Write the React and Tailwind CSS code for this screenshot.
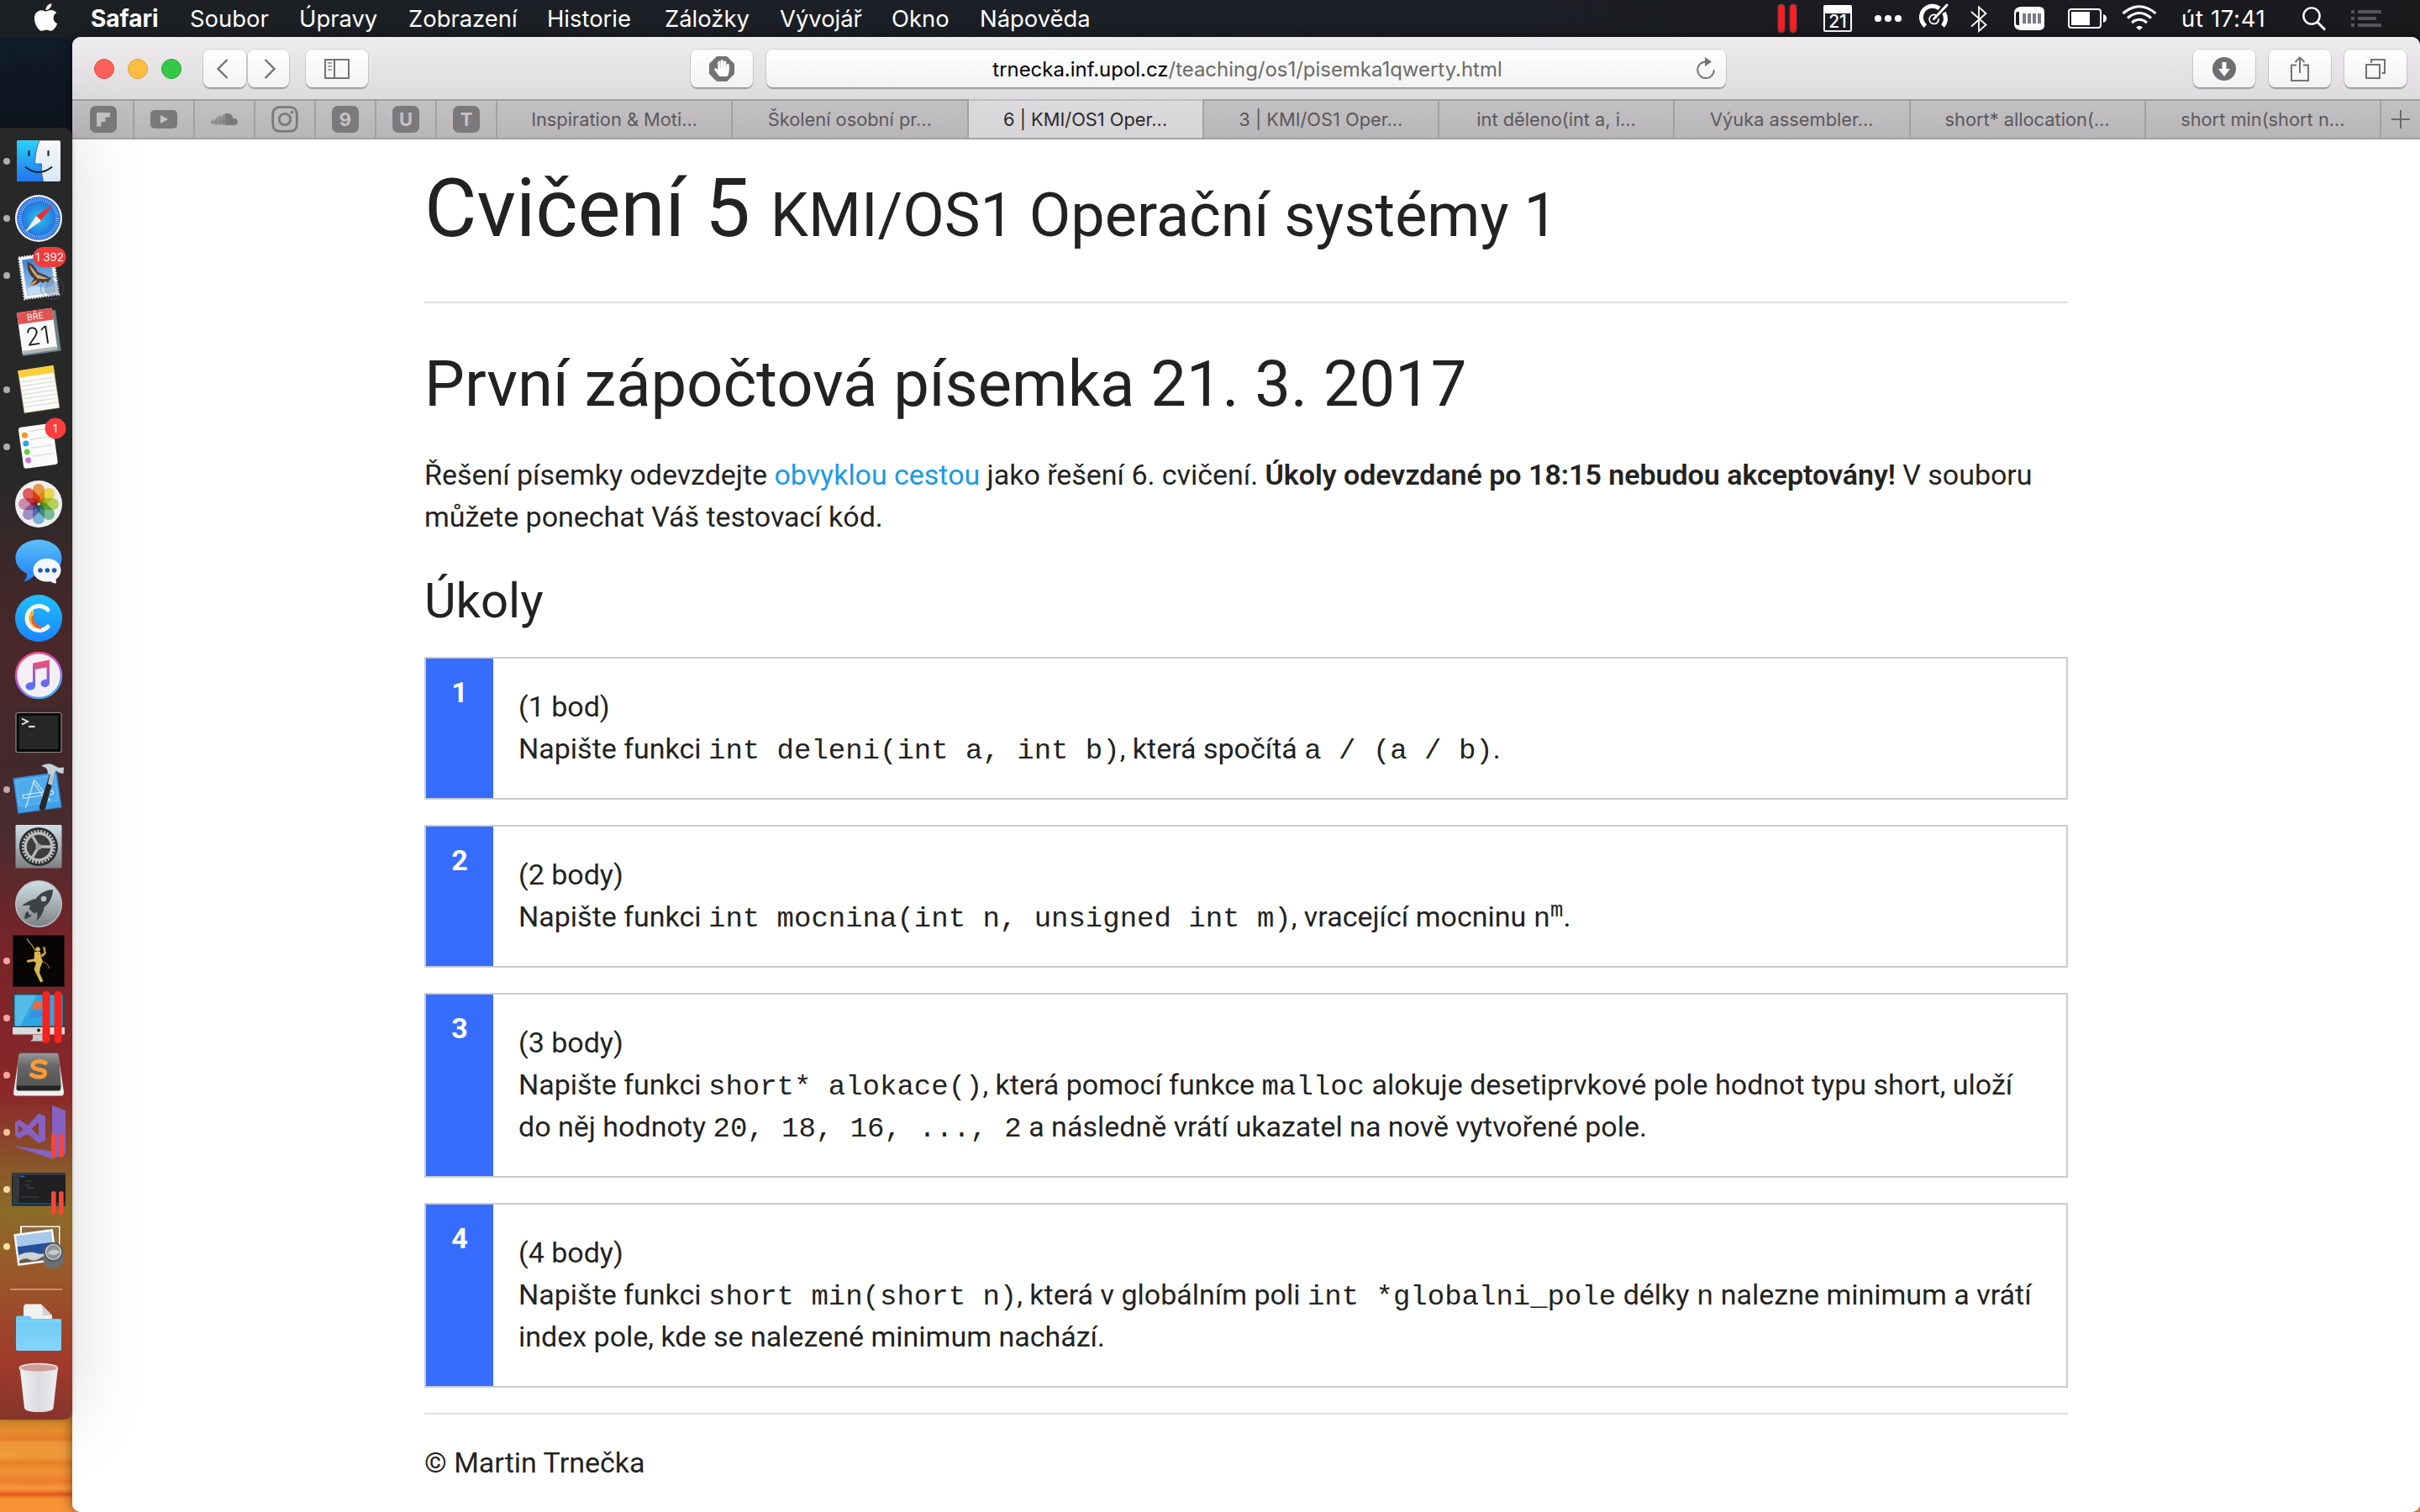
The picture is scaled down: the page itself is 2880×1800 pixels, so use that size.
import React from "react";
import { FaApple, FaHandPaper, FaInstagram, FaSoundcloud } from "react-icons/fa";

/* ---------- menu bar ---------- */

function MenuItem({ children, className }) {
  return <span className={`shrink-0 whitespace-nowrap ${className}`}>{children}</span>;
}

function MenuBar() {
  return (
    <header className="flex h-11 shrink-0 items-center bg-linear-to-r from-[#1c2024] via-[#1b1f26] to-[#1a1a1d] text-[27.4px] leading-[44px] text-white">
      <FaApple className="-mt-1 ml-[36px] mr-[35px] size-[37px] shrink-0" />
      <MenuItem className="w-[118px] text-[28px] font-bold">Safari</MenuItem>
      <MenuItem className="w-[130px]">Soubor</MenuItem>
      <MenuItem className="w-[130px]">Úpravy</MenuItem>
      <MenuItem className="w-[165px]">Zobrazení</MenuItem>
      <MenuItem className="w-[140px]">Historie</MenuItem>
      <MenuItem className="w-[137px]">Záložky</MenuItem>
      <MenuItem className="w-[133px]">Vývojář</MenuItem>
      <MenuItem className="w-[105px]">Okno</MenuItem>
      <MenuItem className="w-[140px]">Nápověda</MenuItem>
      <div className="ml-auto flex items-center">
        <svg className="h-11 w-[26px]" viewBox="0 0 26 44">
          <rect x="2" y="5" width="8" height="34" rx="4" fill="#fe1c20" stroke="#6b4a4c" strokeWidth="0.8" />
          <rect x="16" y="5" width="8" height="34" rx="4" fill="#fe1c20" stroke="#6b4a4c" strokeWidth="0.8" />
        </svg>
        <div className="ml-[30px] flex h-8 w-[34px] items-end justify-center rounded-[2px] border-2 border-t-[10px] border-white text-[21px] leading-[20px] font-medium">
          21
        </div>
        <svg className="ml-[26px] h-11 w-[34px]" viewBox="0 0 34 44" fill="#fff">
          <circle cx="5" cy="22" r="4.1" />
          <circle cx="17" cy="22" r="4.1" />
          <circle cx="29" cy="22" r="4.1" />
        </svg>
        <svg className="ml-[20px] h-11 w-[36px]" viewBox="0 0 36 44" fill="none" stroke="#fff">
          <path d="M7.5 31 A13.3 13.3 0 0 1 24 10" strokeWidth="5" />
          <path d="M29.5 15 A13.3 13.3 0 0 1 28 31" strokeWidth="5" />
          <path d="M20 18 A5.5 5.5 0 1 0 23 22" strokeWidth="1.8" />
          <path d="M33 6 L17.5 22.5" strokeWidth="3" strokeLinecap="round" />
        </svg>
        <svg className="ml-[24px] h-11 w-[22px]" viewBox="0 0 22 44" fill="none" stroke="#fff" strokeWidth="1.8">
          <path d="M2 14 L19.5 29.5 L11 37 V8.5 L19.5 16 L2 31.5" />
        </svg>
        <svg className="ml-[31px] h-11 w-[36px]" viewBox="0 0 36 44">
          <path d="M8 8 H29 Q36 8 36 14 V30 Q36 36 29 36 H8 Q0 35 0 29 V15 Q0 9 8 8Z" fill="#fff" />
          <path d="M6 14 H4 Q2 14 2 17 V27 Q2 30 4 30 H6Z" fill="#1a1b20" />
          <path d="M10 16h4v12h-4z M16 16h4v12h-4z M22 16h4v12h-4z M28 16h4v12h-4z" fill="#7c7c82" />
        </svg>
        <svg className="ml-[28px] h-11 w-[46px]" viewBox="0 0 46 44">
          <rect x="1" y="11" width="38" height="22" rx="3" fill="none" stroke="#fff" strokeWidth="2" />
          <rect x="4" y="14" width="22" height="16" fill="#fff" />
          <path d="M42 17 Q46 18 46 22 Q46 26 42 27Z" fill="#fff" />
        </svg>
        <svg className="ml-[18px] h-11 w-[42px]" viewBox="0 0 42 44" fill="none" stroke="#fff" strokeWidth="3">
          <path d="M1.500 16 Q21 -0.500 40.500 16" />
          <path d="M7 21.500 Q21 9.500 35 21.500" />
          <path d="M12 27 Q21 19.500 30 27" />
          <path d="M17 32.500 Q21 29 25 32.500 L21 36Z" fill="#fff" stroke="none" />
        </svg>
        <span className="ml-[29px] w-[102px] whitespace-nowrap tracking-[0.7px]">út 17:41</span>
        <svg className="ml-[40px] h-11 w-[32px]" viewBox="0 0 32 44" fill="none" stroke="#fff">
          <circle cx="13" cy="19" r="9.6" strokeWidth="2.4" />
          <path d="M19.5 26 L29 35.5" strokeWidth="3" />
        </svg>
        <svg className="ml-[28px] mr-[46px] h-11 w-[36px]" viewBox="0 0 36 44" fill="#56565a">
          <path d="M0 12h4v4H0z M8 12h28v4H8z M0 20h4v4H0z M8 20h22v4H8z M0 28h4v4H0z M8 28h28v4H8z" />
        </svg>
      </div>
    </header>
  );
}

/* ---------- dock ---------- */

function DockRow({ dot, children }) {
  return (
    <div className="flex h-[68px] shrink-0 items-center">
      <span className={`ml-1 size-2 shrink-0 rounded-full ${dot || "bg-transparent"}`} />
      <svg className="ml-0.5 size-16 shrink-0 overflow-visible" viewBox="0 0 64 64">
        {children}
      </svg>
    </div>
  );
}

const petals = ["#f7962b", "#f6e33a", "#b9d64a", "#6cc08a", "#6fb3e0", "#9a8bc8", "#d582b0", "#ee4b43"];

function Dock() {
  return (
    <aside className="relative z-10 mt-[108px] flex h-[1538px] w-[86px] flex-col rounded-tr-[10px] rounded-br-[10px] bg-[linear-gradient(180deg,#282828_0px,#282828_410px,#4a282a_610px,#42282c_750px,#4a2c30_840px,#782428_975px,#8a272a_1150px,#8a562a_1235px,#8b6b28_1290px,#985a2a_1355px,#a03a2c_1470px,#86352b_1538px)] pt-1.5 font-[Inter,sans-serif] shadow-[0_0_90px_rgba(0,0,0,0.15),0_0_4px_rgba(0,0,0,0.25)]">
      <svg className="absolute size-0">
        <defs>
          <linearGradient id="blueV" x1="0" y1="0" x2="0" y2="1"><stop offset="0" stopColor="#2bd0fa" /><stop offset="1" stopColor="#2174ee" /></linearGradient>
          <linearGradient id="whiteV" x1="0" y1="0" x2="0" y2="1"><stop offset="0" stopColor="#f8f8fa" /><stop offset="1" stopColor="#d8e6f4" /></linearGradient>
          <radialGradient id="compass"><stop offset="0" stopColor="#27c6ea" /><stop offset="1" stopColor="#2361de" /></radialGradient>
          <linearGradient id="sky" x1="0" y1="0" x2="0" y2="1"><stop offset="0" stopColor="#3a84d6" /><stop offset="1" stopColor="#a5cdf0" /></linearGradient>
          <linearGradient id="chat" x1="0" y1="0" x2="0" y2="1"><stop offset="0" stopColor="#5cc1f8" /><stop offset="1" stopColor="#1c7df6" /></linearGradient>
          <linearGradient id="cblue" x1="0" y1="0" x2="0" y2="1"><stop offset="0" stopColor="#20c0fc" /><stop offset="1" stopColor="#1a84fb" /></linearGradient>
          <linearGradient id="ring" x1="0.2" y1="0" x2="0.7" y2="1"><stop offset="0" stopColor="#fb4a5c" /><stop offset="0.5" stopColor="#c050e0" /><stop offset="1" stopColor="#35b9f4" /></linearGradient>
          <linearGradient id="note" x1="0" y1="0" x2="0" y2="1"><stop offset="0" stopColor="#fb4f63" /><stop offset="0.6" stopColor="#8a62e8" /><stop offset="1" stopColor="#4a74f2" /></linearGradient>
          <linearGradient id="steel" x1="0" y1="0" x2="0" y2="1"><stop offset="0" stopColor="#d0e0e8" /><stop offset="1" stopColor="#7e8082" /></linearGradient>
          <linearGradient id="keycap" x1="0" y1="0" x2="0" y2="1"><stop offset="0" stopColor="#9a9a9a" /><stop offset="0.4" stopColor="#666" /><stop offset="1" stopColor="#555" /></linearGradient>
          <linearGradient id="folder" x1="0" y1="0" x2="0" y2="1"><stop offset="0" stopColor="#6ccbf3" /><stop offset="1" stopColor="#84d4fa" /></linearGradient>
          <linearGradient id="trash" x1="0" y1="0" x2="1" y2="0"><stop offset="0" stopColor="#f2f2f3" /><stop offset="0.5" stopColor="#dadbde" /><stop offset="1" stopColor="#eeeef0" /></linearGradient>
        </defs>
      </svg>

      {/* Finder */}
      <DockRow dot="bg-[#adadad]">
        <rect x="6" y="7.3" width="52" height="48.7" rx="2" fill="url(#whiteV)" />
        <path d="M8 7.3 H33 C29 17 28 26 27.5 35 H35.5 C35 43 36 50 37.5 56 H8 Q6 56 6 54 V9.3 Q6 7.3 8 7.3Z" fill="url(#blueV)" />
        <path d="M33 7.3 C29 17 28 26 27.5 35 H35.5 C35 43 36 50 37.5 56" fill="none" stroke="#23435f" strokeWidth="0.7" />
        <path d="M20.5 20v5 M43.5 20v5" stroke="#10263c" strokeWidth="2.2" strokeLinecap="round" />
        <path d="M16.5 39 Q32 51 47.5 39" fill="none" stroke="#10202e" strokeWidth="2" strokeLinecap="round" />
      </DockRow>

      {/* Safari */}
      <DockRow dot="bg-[#adadad]">
        <circle cx="32" cy="32" r="28" fill="#f0f1f3" />
        <circle cx="32" cy="32" r="25.8" fill="url(#compass)" />
        <circle cx="32" cy="32" r="22.5" fill="none" stroke="#b9dcf6" strokeWidth="4.5" strokeDasharray="0.8 1.56" opacity="0.8" />
        <path d="M49 15 L29 29 L35 35Z" fill="#ee2f37" />
        <path d="M15.5 49 L29 29 L35 35Z" fill="#eceef0" />
      </DockRow>

      {/* Mail */}
      <DockRow dot="bg-[#adadad]">
        <g transform="rotate(-8 32 32)">
          <rect x="11.5" y="7.5" width="41" height="50" fill="#f3f3f3" stroke="#f3f3f3" strokeWidth="2.4" strokeDasharray="1.7 1.5" />
          <rect x="15" y="11" width="34" height="43" fill="url(#sky)" />
          <path d="M16 46 Q24 42 32 46 T48 44 V53 H16Z" fill="#d4e6f6" opacity="0.7" />
          <path d="M21 14 C27 17 30 22 31.500 28 C37 31 43 34 47 38 L44 39 L42 42 L39 40 L36 42 L33 39.500 C30 42 25 43 20 42 C22 39 24.500 37 26 35 C21 30 19 21 21 14Z" fill="#4f3b2c" />
          <path d="M22.500 18 C26 21 28 26 30.500 30.500 C35 33 40 35 44 37.500 C39 37.500 34 36.500 30.500 35.500 C27 31 23.500 25 22.500 18Z" fill="#bfa584" />
          <path d="M20 42 C22.500 39 26 37 29.500 37.500 C27.500 40.500 24 42.500 20 42Z" fill="#d9a05a" />
        </g>
        <circle cx="48" cy="47" r="13.5" fill="none" stroke="#42617f" strokeWidth="0.8" opacity="0.7" />
        <circle cx="48" cy="47" r="9.5" fill="#42617f" opacity="0.3" />
        <rect x="25.5" y="-2" width="39" height="24" rx="12" fill="#ef3d3c" />
        <text x="45" y="15" fontSize="13.5" fill="#fff" textAnchor="middle">1 392</text>
      </DockRow>

      {/* Calendar */}
      <DockRow>
        <g transform="rotate(-8 32 32)">
          <rect x="9.5" y="8" width="46" height="49" rx="1" fill="#6d8089" />
          <rect x="9.5" y="5" width="42" height="50" rx="1" fill="#f9f9f9" />
          <path d="M9.5 6 q0-1 1-1 h40 q1 0 1 1 V19 H9.5Z" fill="#e05553" />
          <path d="M10 51h41v4H10z" fill="#33383b" opacity="0.35" />
          <text x="30.5" y="16" fontSize="10.5" fill="#fff" textAnchor="middle">BŘE</text>
          <text x="30.5" y="46" fontSize="29" fontWeight="300" fill="#1b1b1b" textAnchor="middle">21</text>
        </g>
      </DockRow>

      {/* Notes */}
      <DockRow dot="bg-[#adadad]">
        <g transform="rotate(-8.5 32 32)">
          <rect x="11" y="6" width="42.5" height="51" fill="#fbfbf8" stroke="#a3883a" strokeWidth="0.5" />
          <rect x="11" y="6" width="42.5" height="8.5" fill="#fcce3a" />
          <path d="M11 20h42 M11 25h42 M11 30h42 M11 35h42 M11 40h42 M11 45h42 M11 50h42" stroke="#cfcfcf" strokeWidth="0.8" />
        </g>
      </DockRow>

      {/* Reminders */}
      <DockRow dot="bg-[#adadad]">
        <g transform="rotate(-8 32 32)">
          <rect x="11" y="6" width="41" height="49.5" rx="3" fill="#fafafa" />
          <path d="M23 12h26 M23 22h26 M23 32h26 M23 42h26" stroke="#cccccc" strokeWidth="0.8" />
          <circle cx="17.5" cy="16" r="3.5" fill="#fb9322" />
          <circle cx="17.5" cy="26" r="3.5" fill="#27a7f5" />
          <circle cx="17.5" cy="36" r="3.5" fill="#61cf3f" />
          <circle cx="17.5" cy="46" r="3.5" fill="#c774dd" />
        </g>
        <circle cx="52" cy="10" r="12.5" fill="#fa3e3e" />
        <text x="51.5" y="14.7" fontSize="13.5" fill="#fff" textAnchor="middle">1</text>
      </DockRow>

      {/* Photos */}
      <DockRow>
        <circle cx="32" cy="32" r="28" fill="#eeeef0" />
        {petals.map((c, i) => (
          <rect key={c} x="25" y="8" width="14" height="24" rx="7" fill={c} opacity="0.86" transform={`rotate(${i * 45} 32 32)`} className="mix-blend-multiply" />
        ))}
        <circle cx="32" cy="32" r="1.5" fill="#fff" />
      </DockRow>

      {/* Messages */}
      <DockRow>
        <path d="M32 6.5 C47.5 6.5 59.5 16 59.5 28.5 C59.5 41 47.5 50.5 32 50.5 C30 50.5 28 50.3 26 50 C23 53.5 18.5 56 14 56 C17 53.5 18.5 50 18 47 C9.5 43 4.5 36 4.5 28.5 C4.5 16 16.5 6.5 32 6.5Z" fill="url(#chat)" />
        <path d="M42 29 C51.5 29 58.5 35 58.5 42.8 C58.5 47 56.5 51 52.5 53.7 C52.5 55.5 53.5 57.5 52.5 58.5 C49.5 58.5 47.5 57.5 46 56 C44.5 56.5 43 56.5 42 56.5 C32.5 56.5 25.5 50.5 25.5 42.8 C25.5 35 32.5 29 42 29Z" fill="#f1f7fd" />
        <circle cx="34" cy="43" r="2.8" fill="#1d5cae" />
        <circle cx="42.3" cy="43" r="2.8" fill="#1d5cae" />
        <circle cx="50.6" cy="43" r="2.8" fill="#1d5cae" />
      </DockRow>

      {/* Blue disc with a C */}
      <DockRow>
        <circle cx="32" cy="32" r="28" fill="url(#cblue)" />
        <path d="M43 22 A14.5 14.5 0 1 0 43 42" fill="none" stroke="#f3f5f6" strokeWidth="5" strokeLinecap="round" />
        <path d="M24.5 25 Q20 33 26 40.5" fill="none" stroke="#f9b82b" strokeWidth="4" strokeLinecap="round" />
        <path d="M24.8 31 Q23.5 40 34 43.3" fill="none" stroke="#fb5a12" strokeWidth="3" strokeLinecap="round" />
      </DockRow>

      {/* iTunes */}
      <DockRow>
        <circle cx="32" cy="32" r="27" fill="#f3f0f5" stroke="url(#ring)" strokeWidth="2.6" />
        <path d="M25 17.5 L45 13.5 V40.5 C45 43.5 42.5 46 39.5 46 C36.5 46 34.5 44 34.5 41.5 C34.5 38.5 37.5 37 41.5 36.5 V22.5 L28 25 V44 C28 47 25.5 49.5 22 49.5 C19 49.5 16.5 47.5 16.5 45 C16.5 42 19.5 40.5 25 40Z" fill="url(#note)" />
      </DockRow>

      {/* Terminal */}
      <DockRow>
        <rect x="5" y="8.5" width="54" height="47" rx="2" fill="#050505" stroke="#8a8a8c" strokeWidth="1.2" />
        <rect x="8.5" y="12" width="47" height="40" fill="#262626" />
        <path d="M12 15.5 L19 19 L12 22.5 M20 25 h7.5" fill="none" stroke="#f2f2f2" strokeWidth="1.9" />
      </DockRow>

      {/* Xcode */}
      <DockRow dot="bg-[#c5a5a7]">
        <g transform="rotate(-8 30 36)">
          <rect x="4.5" y="15" width="52" height="42" fill="#3f9fe8" stroke="#2c7cc9" strokeWidth="0.8" />
          <rect x="7" y="18" width="47" height="31" fill="#5ab4f3" opacity="0.6" stroke="#a7daf9" strokeWidth="0.7" />
          <path d="M29 20 L17 46 L14 52 M29 20 L44 46 L40 47 L27 22 M13 36 H49 V40 H13Z" fill="none" stroke="#c4e6fc" strokeWidth="1.3" />
        </g>
        <path d="M45.5 12 L51 14 L40 54.5 Q38 58.5 33.5 56 Q32.5 55 33 52Z" fill="#262728" />
        <path d="M46 12 L51 14 L48 27 L43 25Z" fill="#b9c2c8" />
        <path d="M35 4 C40 0.5 46 0.5 50 3 L56 6 L62 5.5 L61.5 13 L56 12 L53 9.5 L49 15 L43 13 C43 7 40 5 35 4Z" fill="#c5d2d8" />
      </DockRow>

      {/* System Preferences */}
      <DockRow>
        <rect x="4.5" y="6" width="55" height="51.5" rx="1.5" fill="url(#steel)" />
        <circle cx="32" cy="32" r="23" fill="#2c2d2e" />
        <circle cx="32" cy="32" r="18.7" fill="none" stroke="#c2c2c2" strokeWidth="3" strokeDasharray="2.2 1.7" />
        <circle cx="32" cy="32" r="15.8" fill="#3d3d3d" stroke="#bdbdbd" strokeWidth="3.2" />
        <path d="M32 32 L46.5 32 M32 32 L24.7 19.5 M32 32 L24.7 44.5" stroke="#b5b5b5" strokeWidth="3.4" />
        <circle cx="32" cy="32" r="3.6" fill="#a2a2a2" />
      </DockRow>

      {/* Launchpad */}
      <DockRow>
        <circle cx="32" cy="32" r="27.3" fill="url(#steel)" stroke="#b9c3c8" strokeWidth="1.4" />
        <path d="M49 15 C41 15.5 34 18.5 28.5 26 C24 27 17.500 29.500 12 34.500 C16 33.500 19.500 33.500 22 34 L20.500 38 L26.500 43.500 L30 42 C31 45 30.500 48.500 29 52.500 C34.500 48 38 42 38.500 36 C45.500 31 48.500 23.500 49 15Z" fill="#3d4246" />
        <circle cx="38" cy="26" r="3.3" fill="#b9c0c3" />
        <path d="M19.5 40.5 C16 42.5 15 46 15.5 50 C19.5 49 22.5 47.5 24.5 44.5 C22 46.5 19.5 44.5 19.5 40.5Z" fill="#3d4246" />
      </DockRow>

      {/* Golden figure */}
      <DockRow dot="bg-[#f5a4a5]">
        <rect x="1.5" y="1.5" width="61" height="61" fill="#070504" stroke="#2b1a18" strokeWidth="1" />
        <path d="M6 8h54 M6 16h54 M6 24h54 M6 32h54 M6 40h54 M6 48h54 M6 56h54" stroke="#241c14" strokeWidth="1" strokeDasharray="1 4" />
        <path d="M18 5 Q20 10 24 13 L28 20" fill="none" stroke="#b9963f" strokeWidth="1.2" />
        <circle cx="31" cy="18" r="2.8" fill="#d9b650" />
        <path d="M27 21 L34 21 L35 28 L37 32 L34 40 L33 46 L37.500 56 L34 57.500 L30 49 L26.500 42 L29 34 L26 32.500 L18.500 34 L18 31 L26.500 29.500Z" fill="#d9b650" />
        <path d="M34 25 L38.500 22 L37 15 L39.500 15.500 L41 23 L36 28Z" fill="#c3a046" />
        <path d="M36 33 Q43 34 44.500 41" fill="none" stroke="#9c7f36" strokeWidth="1" />
      </DockRow>

      {/* Parallels desktop */}
      <DockRow dot="bg-[#f8a3a4]">
        <path d="M25 52 H38 V57 L41 59.500 H22 L25 57Z" fill="#c4c7ca" />
        <rect x="1" y="2" width="62" height="41" rx="1" fill="#35424c" />
        <rect x="3.5" y="4.5" width="57" height="37" fill="#2ba6e2" />
        <path d="M3.5 4.5h26 L10 41.5H3.5z" fill="#8fdcf4" opacity="0.4" />
        <path d="M26 13 Q30 11 36 13 V21 Q30 20 24 22Z" fill="#ea6a3b" />
        <path d="M23.500 24 Q30 21.500 36 23 V31 Q29 29 21.500 32Z" fill="#3c8fe0" />
        <path d="M1 43h62v7.5q0 1-1 1H2q-1 0-1-1z" fill="#d8dadc" />
        <circle cx="32" cy="46.5" r="2" fill="#222" />
        <rect x="36.5" y="0" width="9" height="62" rx="4.5" fill="#f4231f" />
        <rect x="50.5" y="0" width="9" height="62" rx="4.5" fill="#f4231f" />
      </DockRow>

      {/* Sublime Text */}
      <DockRow dot="bg-[#fba4a4]">
        <path d="M8.5 9 H55.5 L62 52 Q62 56.5 59 56.5 H5 Q2 56.5 2 53Z" fill="#ededee" />
        <path d="M10 5.5 Q11 5 13 5 H51 Q55 5 55.5 8 L58.5 45 Q58.5 50.5 56 50.5 H8 Q5 50.5 5.5 46Z" fill="#242424" />
        <path d="M11.5 5.5 H52.5 Q55.5 5.5 56 9 L58.5 43 Q58.5 44.5 57 44.5 H7 Q5.5 44.5 5.5 43 L8 9 Q8.5 5.5 11.5 5.5Z" fill="url(#keycap)" />
        <path d="M40 17.5 C35 14.5 25.5 14.5 25 20.5 C24.5 27 39.5 23.5 39.5 29.5 C39.5 35.5 28 35 23.5 31.5" fill="none" stroke="#fb9a35" strokeWidth="5" strokeLinecap="round" />
      </DockRow>

      {/* Visual Studio in a VM */}
      <DockRow dot="bg-[#fcbf9e]">
        <path d="M48 0 L64 6 V58 L48 63.5 L1.5 48 L48 54.5Z" fill="#8561c2" />
        <path fillRule="evenodd" d="M4 20 L9 17 L19 24 L32 9.5 L40 13 V42 L32 45 L19 34 L9 39 L4 36Z M8 23 V33 L13.5 28.5Z M32 20 L23.5 28 L32 36Z" fill="#8561c2" />
        <rect x="47" y="34" width="5.6" height="28" rx="2.8" fill="#fb4434" />
        <rect x="56" y="34" width="5.6" height="28" rx="2.8" fill="#fb4434" />
      </DockRow>

      {/* Minimised VM window */}
      <DockRow dot="bg-[#fbdc9f]">
        <rect x="0" y="12" width="64" height="39.5" fill="#1e2022" />
        <rect x="0" y="12" width="64" height="3" fill="#333b46" />
        <rect x="1" y="15" width="8" height="33" fill="#35373a" />
        <path d="M10 16.5h5" stroke="#1177bb" strokeWidth="1.5" />
        <path d="M16 22h8 M16 27h5 M18 30h9 M12 41h20" stroke="#4c5054" strokeWidth="0.9" />
        <path d="M0 49h64" stroke="#0b5a9a" strokeWidth="1.6" />
        <rect x="47" y="34" width="5.6" height="28" rx="2.8" fill="#fb4434" />
        <rect x="56" y="34" width="5.6" height="28" rx="2.8" fill="#fb4434" />
      </DockRow>

      {/* Preview */}
      <DockRow dot="bg-[#fbe1a3]">
        <rect x="10" y="7.5" width="47.5" height="34" fill="#f5f5f5" />
        <rect x="12" y="9" width="44" height="30" fill="#8d6a3a" />
        <g transform="rotate(-7.5 32 36)">
          <rect x="5" y="13.5" width="47" height="38" fill="#f7f7f7" />
          <rect x="7.5" y="16" width="42" height="33" fill="#a9c9ec" />
          <path d="M7.5 29h42v12h-42z" fill="#27509c" />
          <path d="M7.5 39 Q20 35 30 40 T49.5 38 V49 H7.5Z" fill="#cfd4d6" />
          <path d="M7.5 46 Q14 42 20 46 T36 44 L40 49H7.5Z" fill="#6a5a48" />
        </g>
        <path d="M38 42 V50 Q40 58.5 49.5 58.5 Q59.5 58.5 61 50 V38Z" fill="#6c6e72" />
        <circle cx="49.5" cy="38.5" r="11.5" fill="#55585c" />
        <circle cx="49.5" cy="38.5" r="9" fill="#8e9497" stroke="#e0e3e5" strokeWidth="1.2" />
        <path d="M42.5 40 Q49 32 57 38 Q52 45 42.5 40Z" fill="#c6cbcd" />
      </DockRow>

      <div className="mt-4 ml-3 h-0.5 w-[62px] shrink-0 bg-[#cf8d5c]" />

      <div className="mt-[5px] flex flex-col gap-2">
        {/* Documents folder */}
        <DockRow>
          <path d="M14 27 V12.5 L16 9.5 H35 L48 23 V30 H14Z" fill="#f1f1f2" />
          <path d="M35 10 Q38 18 36.5 23 L48 23Z" fill="#cfd0d2" />
          <path d="M5 25 Q5 23.5 7 23.5 H21 L24.5 27 H57.5 Q59 27 59 29 V63 Q59 65 57 65 H7 Q5 65 5 63Z" fill="url(#folder)" />
          <path d="M5.5 30h53" stroke="#a5e1fb" strokeWidth="0.9" />
        </DockRow>
        {/* Trash */}
        <DockRow>
          <path d="M9.5 9 H55 L49.5 57 Q49 62 32 62 Q16 62 15 57Z" fill="url(#trash)" />
          <ellipse cx="32" cy="9.5" rx="22.7" ry="5" fill="#cf9d99" stroke="#e9e6e7" strokeWidth="1.5" />
        </DockRow>
      </div>
    </aside>
  );
}

/* ---------- browser chrome ---------- */

function ToolButton({ className, children }) {
  return (
    <div className={`relative flex h-[45px] shrink-0 items-center justify-center rounded-[8px] bg-linear-to-b from-white to-[#f2f2f2] shadow-[0_0_0_1px_rgba(0,0,0,0.10),0_1.5px_1px_rgba(0,0,0,0.28)] ${className}`}>
      {children}
    </div>
  );
}

function Toolbar() {
  return (
    <div className="flex h-[74px] shrink-0 items-center bg-linear-to-b from-[#eeecef] to-[#dddbde] pt-px pr-4 pl-[26px]">
      <div className="flex gap-4">
        <span className="size-6 rounded-full border border-[#e2463f] bg-[#fd605b]" />
        <span className="size-6 rounded-full border border-[#e0a033] bg-[#fdbd40]" />
        <span className="size-6 rounded-full border border-[#27a538] bg-[#34c84a]" />
      </div>
      <ToolButton className="ml-[26px] w-[51px] pr-1.5">
        <svg className="h-6 w-4" viewBox="0 0 16 24" fill="none" stroke="#737274" strokeWidth="2.4"><path d="M13.5 1 L2.5 12 L13.5 23" /></svg>
      </ToolButton>
      <ToolButton className="ml-0.5 w-[49px] pl-0.5">
        <svg className="h-6 w-4" viewBox="0 0 16 24" fill="none" stroke="#737274" strokeWidth="2.4"><path d="M2.5 1 L13.5 12 L2.5 23" /></svg>
      </ToolButton>
      <ToolButton className="ml-5 w-[74px]">
        <svg className="h-6 w-[30px]" viewBox="0 0 30 24" fill="none" stroke="#737274" strokeWidth="2">
          <path d="M1 1h28v22H1z M12 1v22" />
          <path d="M4 5h5 M4 9h5 M4 13h5" strokeWidth="1.6" stroke="#8c8c8e" />
        </svg>
      </ToolButton>
      <ToolButton className="ml-96 w-[74px]">
        <svg className="size-[30px]" viewBox="0 0 30 30"><path d="M9 0h12l9 9v12l-9 9H9l-9-9V9z" fill="#737274" /></svg>
        <FaHandPaper className="absolute top-[12px] left-[27px] size-5 text-white" />
      </ToolButton>
      <ToolButton className="ml-4 w-[1142px]">
        <span className="pt-0.5 pl-[3px] text-[23.95px] leading-[45px] text-[#6b6b6b]">
          <span className="text-black">trnecka.inf.upol.cz</span>/teaching/os1/pisemka1qwerty.html
        </span>
        <svg className="absolute top-2 right-3 h-7 w-6" viewBox="0 0 24 28" fill="none" stroke="#737274" strokeWidth="2">
          <path d="M12 6.5 A9.8 9.8 0 1 0 21.8 16.5" />
          <path d="M11 1 L19 6.5 L11 12Z" fill="#737274" stroke="none" />
        </svg>
      </ToolButton>
      <div className="ml-auto flex gap-4">
        <ToolButton className="w-[74px]">
          <svg className="size-7" viewBox="0 0 28 28">
            <circle cx="14" cy="14" r="14" fill="#6f6e71" />
            <path d="M11.5 6h5v8h4.5L14 23 7 14h4.5z" fill="#fff" />
          </svg>
        </ToolButton>
        <ToolButton className="w-[74px]">
          <svg className="h-[30px] w-6" viewBox="0 0 24 30" fill="none" stroke="#737274" strokeWidth="2">
            <path d="M8 10.5H2V29h20V10.5h-6 M12 20V2 M6.5 7 L12 1.5 L17.5 7" />
          </svg>
        </ToolButton>
        <ToolButton className="w-[74px]">
          <svg className="size-6" viewBox="0 0 24 24" fill="none" stroke="#737274" strokeWidth="2">
            <path d="M7 5V1h16v16h-3.5" />
            <rect x="1" y="7" width="16" height="16" />
          </svg>
        </ToolButton>
      </div>
    </div>
  );
}

const tabs = [
  "Inspiration & Moti...",
  "Školení osobní pr...",
  "6 | KMI/OS1 Oper...",
  "3 | KMI/OS1 Oper...",
  "int děleno(int a, i...",
  "Výuka assembler...",
  "short* allocation(...",
  "short min(short n...",
];

function Pin({ children }) {
  return <div className="flex w-[72px] shrink-0 items-center justify-center border-r-2 border-[#a3a1a3] text-[#7b797c]">{children}</div>;
}

function Letter({ children }) {
  return <span className="flex size-8 items-center justify-center rounded-[7px] bg-[#7b797c] text-[22px] leading-none font-bold text-[#c4c2c4]">{children}</span>;
}

function TabBar() {
  return (
    <div className="flex h-12 shrink-0 border-t-2 border-b-2 border-[#a3a1a3] bg-linear-to-b from-[#c3c0c3] to-[#b9b6b9] pl-0.5">
      <Pin>
        <svg className="size-8" viewBox="0 0 32 32">
          <rect width="32" height="32" rx="7" fill="#7b797c" />
          <path d="M8 8h16v5.5H18.5V19H13.5v5.5H8z" fill="#c4c2c4" />
        </svg>
      </Pin>
      <Pin>
        <svg className="h-[22px] w-8" viewBox="0 0 32 22">
          <rect width="32" height="22" rx="5" fill="#7b797c" />
          <path d="M12 6l9 5-9 5z" fill="#c4c2c4" />
        </svg>
      </Pin>
      <Pin><FaSoundcloud className="size-8" /></Pin>
      <Pin><FaInstagram className="size-9" /></Pin>
      <Pin><Letter>9</Letter></Pin>
      <Pin><Letter>U</Letter></Pin>
      <Pin><Letter>T</Letter></Pin>
      {tabs.map((t, i) => (
        <div
          key={t}
          className={`flex flex-1 items-center justify-center border-r-2 border-[#a3a1a3] pt-px text-[21.8px] leading-none whitespace-nowrap ${
            i === 2 ? "-mt-0.5 border-t-2 border-t-[#bdbbbd] bg-linear-to-b from-[#dcdadd] to-[#d6d4d7] text-[#2b2b2b]" : "text-[#5a595b]"
          }`}
        >
          {t}
        </div>
      ))}
      <div className="flex w-[46px] items-center justify-center">
        <svg className="size-[22px]" viewBox="0 0 22 22" stroke="#6b6a6c" strokeWidth="2"><path d="M11 0v22 M0 11h22" /></svg>
      </div>
    </div>
  );
}

/* ---------- page ---------- */

function Code({ children }) {
  return <code className="font-['Courier_New','Liberation_Mono',monospace] text-[34px] leading-none whitespace-pre">{children}</code>;
}

function Task({ n, className, children }) {
  return (
    <div className={`flex border-2 border-[#cbcbcb] ${className}`}>
      <div className="w-20 shrink-0 bg-[#366cfe] pt-[15px] text-center font-bold text-white">{n}</div>
      <div className="pt-[32px] pl-[30px] whitespace-nowrap">{children}</div>
    </div>
  );
}

function Page() {
  return (
    <main className="flex-1 overflow-hidden bg-white font-[Roboto,sans-serif] text-[34px] leading-[50px] text-[#222]">
      <div className="ml-[419px] flex w-[1956px] flex-col pt-[15px]">
        <h1 className="text-[96px] leading-[134px] whitespace-nowrap">
          Cvičení 5 <small className="text-[72px] leading-none">KMI/OS1 Operační systémy 1</small>
        </h1>
        <hr className="mt-[44px] border-t-2 border-[#dedede]" />
        <h2 className="mt-[43px] text-[76px] leading-[106px] tracking-[-0.05px] whitespace-nowrap">První zápočtová písemka 21. 3. 2017</h2>
        <p className="mt-[30px] tracking-[-0.03px] whitespace-nowrap">
          Řešení písemky odevzdejte <a className="text-[#1b9ae4]">obvyklou cestou</a> jako řešení 6. cvičení.{" "}
          <strong className="font-semibold">Úkoly odevzdané po 18:15 nebudou akceptovány!</strong> V souboru
          <br />
          můžete ponechat Váš testovací kód.
        </p>
        <h3 className="mt-[35px] text-[58px] leading-[80px]">Úkoly</h3>
        <div className="mt-[27px] flex flex-col gap-[30px]">
          <Task n="1" className="h-[170px]">
            (1 bod)
            <br />
            Napište funkci <Code>int deleni(int a, int b)</Code>, která spočítá <Code>a / (a / b)</Code>.
          </Task>
          <Task n="2" className="h-[170px]">
            (2 body)
            <br />
            Napište funkci <Code>int mocnina(int n, unsigned int m)</Code>, vracející mocninu <Code>n</Code>
            <span className="relative -top-[12px] font-['Courier_New','Liberation_Mono',monospace] text-[25.5px] leading-none">m</span>.
          </Task>
          <Task n="3" className="h-[220px]">
            (3 body)
            <br />
            Napište funkci <Code>short* alokace()</Code>, která pomocí funkce <Code>malloc</Code> alokuje desetiprvkové pole hodnot typu short, uloží
            <br />
            do něj hodnoty <Code>20, 18, 16, ..., 2</Code> a následně vrátí ukazatel na nově vytvořené pole.
          </Task>
          <Task n="4" className="h-[220px]">
            (4 body)
            <br />
            Napište funkci <Code>short min(short n)</Code>, která v globálním poli <Code>int *globalni_pole</Code> délky <Code>n</Code> nalezne minimum a vrátí
            <br />
            index pole, kde se nalezené minimum nachází.
          </Task>
        </div>
        <hr className="mt-[30px] border-t-2 border-[#dedede]" />
        <footer className="mt-[32px]">© Martin Trnečka</footer>
      </div>
    </main>
  );
}

export default function App() {
  return (
    <div className="flex h-[1800px] w-[2880px] flex-col overflow-hidden bg-[#10161f] font-[Inter,sans-serif]">
      <MenuBar />
      <div className="flex flex-1 bg-[linear-gradient(180deg,#0f1c28_0px,#10151f_110px,#10151f_1400px,#c9812c_1640px,#df8c2c_1652px,#ee9230_1660px,#e9812a_1669px,#f19a3a_1674px,#f39c3c_1690px,#e88228_1697px,#f29436_1706px,#ee7f2c_1720px,#f59a3a_1728px,#e3561c_1735px,#f59132_1740px,#f8933a_1756px)]">
        <Dock />
        <section className="flex w-[2794px] flex-col overflow-hidden rounded-[10px] bg-white shadow-[0_0_14px_rgba(0,0,0,0.5)]">
          <Toolbar />
          <TabBar />
          <Page />
        </section>
      </div>
    </div>
  );
}
